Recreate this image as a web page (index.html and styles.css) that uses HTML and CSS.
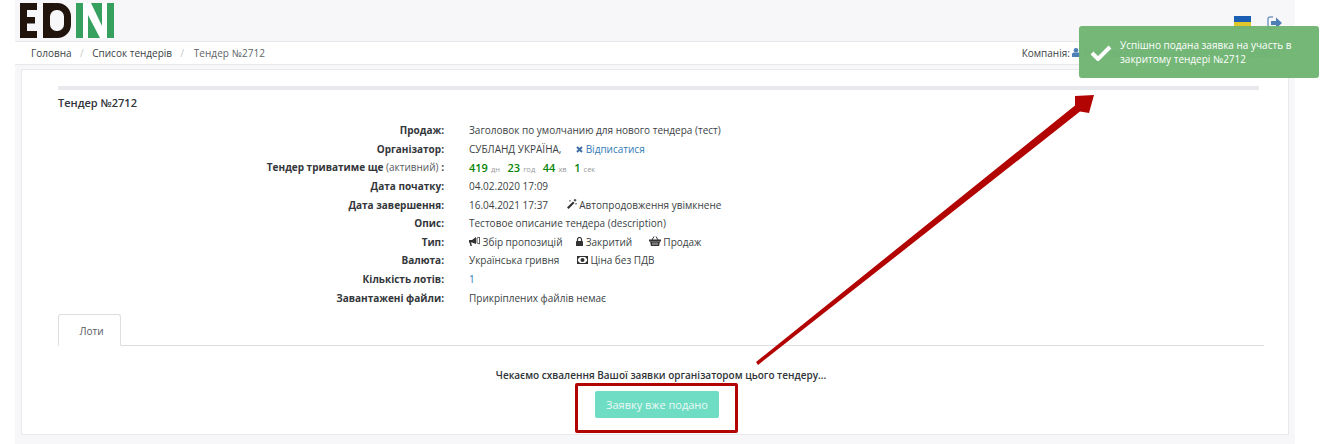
FILE: index.html
```html
<!DOCTYPE html>
<html lang="uk">
<head>
  <meta charset="UTF-8">
  <meta name="viewport" content="width=device-width, initial-scale=1.0">
  <title>Тендер №2712</title>
  <link rel="stylesheet" href="styles.css">
</head>
<body>

  <div class="page">
    <div class="top-bar">
      <svg class="logo" width="95" height="36" viewBox="0 0 95 36" aria-label="EDIN">
        <rect x="0" y="1" width="7" height="35" fill="#20140c"/>
        <rect x="0" y="1" width="17" height="7" fill="#20140c"/>
        <rect x="0" y="15" width="15" height="6.500" fill="#20140c"/>
        <rect x="0" y="29" width="17" height="7" fill="#20140c"/>
        <rect x="23" y="1" width="7" height="35" fill="#20140c"/>
        <rect x="26.500" y="4.500" width="21" height="28" rx="10" fill="none" stroke="#20140c" stroke-width="7"/>
        <rect x="23" y="1" width="12" height="7" fill="#20140c"/>
        <rect x="23" y="29" width="12" height="7" fill="#20140c"/>
        <rect x="56" y="1" width="38" height="35" fill="#36a15f"/>
        <rect x="63" y="1" width="24" height="35" fill="#fff"/>
        <polygon points="71,1 82,1 82,24" fill="#36a15f"/>
        <polygon points="68,13 68,36 80,36" fill="#36a15f"/>
      </svg>
      <div class="top-icons">
        <div class="flag"></div>
        <svg width="15" height="14" viewBox="0 0 15 14">
          <path d="M6 1H3a2 2 0 0 0-2 2v8a2 2 0 0 0 2 2h3" fill="none" stroke="#7c9cc4" stroke-width="1.5"/>
          <path d="M4 5h5V1.500L15 7l-6 5.500V9H4z" fill="#4d7fb5"/>
        </svg>
      </div>
    </div>

    <div class="crumbs">
      <ul class="crumb-list">
        <li>Головна</li>
        <li class="sep">/</li>
        <li>Список тендерів</li>
        <li class="sep">/</li>
        <li class="current">Тендер №2712</li>
      </ul>
      <div class="company">
        Компанія:
        <svg width="8" height="9" viewBox="0 0 8 9"><circle cx="4" cy="2.300" r="2.300" fill="#4d7fb5"/><path d="M0 9V6.500C0 5.200 1 4.600 2 4.600h4c1 0 2 .6 2 1.900V9z" fill="#4d7fb5"/></svg>
        <a href="#">Торговий дім Чорна перлина (31005868)</a>
      </div>
    </div>

    <div class="panel">
      <div class="panel-rule"></div>
      <h1 class="tender-title">Тендер №2712</h1>

      <div class="info">
        <div class="info-row">
          <div class="info-label">Продаж:</div>
          <div class="info-value">Заголовок по умолчанию для нового тендера (тест)</div>
        </div>
        <div class="info-row">
          <div class="info-label">Організатор:</div>
          <div class="info-value">
            <span class="wide">СУБЛАНД УКРАЇНА,</span>
            <a href="#" class="link">
              <svg width="7" height="7" viewBox="0 0 7 7"><path d="M1 1l5 5M6 1L1 6" stroke="#3d6fa5" stroke-width="2"/></svg>
              Відписатися
            </a>
          </div>
        </div>
        <div class="info-row">
          <div class="info-label">Тендер триватиме ще <span class="normal">(активний) </span>:</div>
          <div class="info-value timer">
            <b>419</b><small>дн</small>
            <b>23</b><small>год</small>
            <b>44</b><small>хв</small>
            <b>1</b><small>сек</small>
          </div>
        </div>
        <div class="info-row">
          <div class="info-label">Дата початку:</div>
          <div class="info-value">04.02.2020 17:09</div>
        </div>
        <div class="info-row">
          <div class="info-label">Дата завершення:</div>
          <div class="info-value">
            <span class="date-end">16.04.2021 17:37</span>
            <svg width="10" height="10" viewBox="0 0 10 10"><path d="M0 8.500l6-6L7.500 4l-6 6z" fill="#333"/><path d="M8 0v2.500M6.800 1.200h2.500M9 4v1.500M3 1v1.500" stroke="#333"/></svg>
            Автопродовження увімкнене
          </div>
        </div>
        <div class="info-row">
          <div class="info-label">Опис:</div>
          <div class="info-value">Тестовое описание тендера (description)</div>
        </div>
        <div class="info-row">
          <div class="info-label">Тип:</div>
          <div class="info-value">
            <span class="tag-first">
              <svg width="11" height="9" viewBox="0 0 11 9"><path d="M0 3h3l4-3v7L3 5.500H2L3 9H1.500L.5 5.500H0z" fill="#333"/><path d="M8 1l2.500-1v7L8 6z" fill="none" stroke="#333" stroke-width=".8"/></svg>
              Збір пропозицій
            </span>
            <span class="tag">
              <svg width="7" height="9" viewBox="0 0 7 9"><path d="M1.500 4V2.500a2 2 0 0 1 4 0V4" fill="none" stroke="#333" stroke-width="1.200"/><rect y="4" width="7" height="5" rx=".6" fill="#333"/></svg>
              Закритий
            </span>
            <span>
              <svg width="12" height="10" viewBox="0 0 12 10"><path d="M3 4l2-3.500M9 4L7 .5" stroke="#333" fill="none"/><rect y="3.500" width="12" height="2" fill="#333"/><path d="M1 5.500h10L10 10H2z" fill="#333"/><path d="M4 6.500v2.500M6 6.500v2.500M8 6.500v2.500" stroke="#fff" stroke-width=".7"/></svg>
              Продаж
            </span>
          </div>
        </div>
        <div class="info-row">
          <div class="info-label">Валюта:</div>
          <div class="info-value">
            <span class="currency">Українська гривня</span>
            <span>
              <svg width="11" height="8" viewBox="0 0 11 8"><rect x=".5" y=".5" width="10" height="7" fill="none" stroke="#333"/><circle cx="5.500" cy="4" r="2" fill="#333"/><path d="M1 1h2L1 3zM10 1H8l2 2zM1 7h2L1 5zM10 7H8l2-2z" fill="#333"/></svg>
              Ціна без ПДВ
            </span>
          </div>
        </div>
        <div class="info-row">
          <div class="info-label">Кількість лотів:</div>
          <div class="info-value link">1</div>
        </div>
        <div class="info-row">
          <div class="info-label">Завантажені файли:</div>
          <div class="info-value">Прикріплених файлів немає</div>
        </div>
      </div>

      <div class="tabs">
        <div class="tab">Лоти</div>
      </div>

      <div class="lot-body">
        <p class="wait-text">Чекаємо схвалення Вашої заявки організатором цього тендеру...</p>
        <button class="btn-sent" type="button">Заявку вже подано</button>
      </div>
    </div>
  </div>

  <div class="toast">
    <svg width="22" height="17" viewBox="0 0 22 17"><path d="M2 9l6 6L20 3" fill="none" stroke="#fff" stroke-width="4"/></svg>
    <div class="toast-text">Успішно подана заявка на участь в закритому тендері №2712</div>
  </div>

  <div class="mark-box"></div>

  <svg class="mark-arrow" width="350" height="280" viewBox="0 0 350 280">
    <polygon points="0,267 2,270 324,16.500 333,18 338,0 319,1 319,10.500" fill="#b30404"/>
  </svg>

</body>
</html>
```

FILE: styles.css
```css
* {
  box-sizing: border-box;
}
body {
  margin: 0;
  background: #fff;
  font-family: "Open Sans", sans-serif;
  font-size: 10px;
  color: #3b3f44;
  overflow: hidden;
}
a {
  text-decoration: none;
}
.page {
  width: 1280px;
  height: 444px;
  margin-left: 15px;
  background: #f7f7fa;
}

/* top */
.top-bar {
  height: 41px;
  padding: 2px 13px 0 5px;
  display: flex;
  justify-content: space-between;
}
.logo {
  display: block;
}
.top-icons {
  display: flex;
  gap: 16px;
  padding-top: 14px;
}
.flag {
  width: 17px;
  height: 13px;
  background: linear-gradient(#1a5fb4 50%, #e0c82c 50%);
}

/* breadcrumbs */
.crumbs {
  height: 24px;
  padding: 0 15px 0 16px;
  background: #fff;
  border-top: 1px solid #e8e8ec;
  border-bottom: 1px solid #e8e8ec;
  display: flex;
  justify-content: space-between;
  align-items: center;
}
.crumb-list {
  list-style: none;
  margin: 0;
  padding: 0;
  display: flex;
  gap: 8.500px;
}
.sep {
  color: #c8c8c8;
}
.current {
  color: #5e6469;
  margin-left: 1px;
  letter-spacing: .05px;
}
.company a {
  color: #4d7fb5;
}

/* panel */
.panel {
  height: 366px;
  margin: 4px 6px 0;
  padding: 16px 24px 0 36px;
  background: #fff;
  border: 1px solid #e7eaec;
}
.panel-rule {
  height: 4px;
  margin-right: 5px;
  background: #e7e9ec;
}
.tender-title {
  margin: 5px 0 11px;
  font-size: 11px;
  line-height: 15px;
  font-weight: 600;
  color: #2f3438;
}

/* info rows */
.info-row {
  display: flex;
  height: 18.650px;
  line-height: 18.650px;
}
.info-label {
  width: 386px;
  text-align: right;
  font-weight: 700;
  color: #33363a;
}
.normal {
  font-weight: 400;
  color: #55595e;
}
.info-value {
  margin-left: 25px;
}
.link {
  color: #337ab7;
}
.wide {
  margin-right: 12px;
}
.timer {
  padding-top: 1px;
}
.timer b {
  font-size: 11px;
  font-weight: 600;
  color: #078507;
}
.timer small {
  font-size: 7.500px;
  color: #9a9a9a;
  margin: 0 5px 0 3px;
}
.date-end {
  margin-right: 16px;
}
.tag-first {
  margin-right: 11px;
}
.tag {
  margin-right: 14px;
}
.currency {
  margin-right: 15px;
}

/* tabs */
.tabs {
  margin-top: 7px;
  height: 32px;
  border-bottom: 1px solid #dedede;
}
.tab {
  width: 63px;
  height: 32px;
  padding-left: 4px;
  background: #fff;
  border: 1px solid #dedede;
  border-bottom-color: #fff;
  border-radius: 3px 3px 0 0;
  text-align: center;
  line-height: 33px;
  color: #55595e;
}

/* lot body */
.lot-body {
  text-align: center;
}
.wait-text {
  margin: 22px 0 8px;
  line-height: 15px;
  font-weight: 600;
  color: #2f3438;
}
.btn-sent {
  width: 124px;
  height: 27px;
  margin-right: 8px;
  padding: 0;
  background: #6fdcc4;
  border: none;
  border-radius: 2px;
  font-family: "Open Sans", sans-serif;
  font-size: 11px;
  color: #ecfaf6;
}

/* overlays */
.toast {
  position: absolute;
  left: 1079px;
  top: 26px;
  width: 240px;
  height: 52px;
  padding: 12px 20px 0 11px;
  display: flex;
  gap: 8px;
  background: #70b573;
  border-radius: 3px;
  color: #fff;
  opacity: .97;
  line-height: 14px;
}
.toast svg {
  margin-top: 6px;
  flex: none;
}
.mark-box {
  position: absolute;
  left: 575px;
  top: 383px;
  width: 163px;
  height: 50px;
  border: 3px solid #b30404;
  border-radius: 2px;
}
.mark-arrow {
  position: absolute;
  left: 756px;
  top: 95px;
}
```
